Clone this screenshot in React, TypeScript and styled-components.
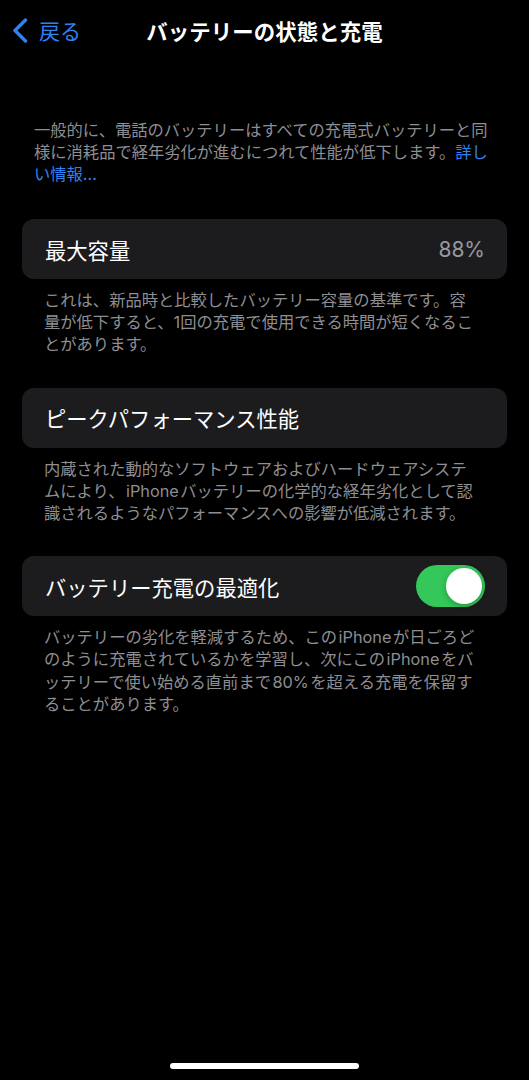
import React from 'react'
import styled, { createGlobalStyle } from 'styled-components'

const GlobalStyle = createGlobalStyle`
  html, body {
    margin: 0;
    padding: 0;
    background: #000;
  }
  body {
    font-family: "Inter", "Noto Sans CJK JP", "Noto Sans", sans-serif;
    -webkit-font-smoothing: antialiased;
  }
`

const Screen = styled.div`
  width: 529px;
  min-height: 1080px;
  display: flex;
  flex-direction: column;
  background: #000;
  color: #fff;
`

const NavBar = styled.header`
  height: 60px;
  display: grid;
  grid-template-columns: 1fr auto 1fr;
  align-items: center;
`

const BackButton = styled.button`
  justify-self: start;
  display: flex;
  align-items: center;
  gap: 11px;
  padding: 0 0 0 12px;
  border: 0;
  background: none;
  color: #2f83f0;
  font-family: inherit;
  font-size: 21px;
  cursor: pointer;
`

const Title = styled.h1`
  margin: 0;
  font-size: 21.4px;
  font-weight: 700;
  letter-spacing: 0.1px;
`

const Content = styled.main`
  display: flex;
  flex-direction: column;
  gap: 32px;
  padding: 59px 22px 0;
`

const Intro = styled.p`
  margin: 0 0 2px;
  padding: 0 12px;
  font-size: 16.3px;
  line-height: 22px;
  color: #8e8e93;
  line-break: loose;
`

const Link = styled.a`
  color: #2f83f0;
  text-decoration: none;
`

const Section = styled.section`
  display: flex;
  flex-direction: column;
  gap: 10px;
`

const Cell = styled.div`
  height: 60px;
  display: flex;
  align-items: center;
  justify-content: space-between;
  padding: 0 22px 0 23px;
  border-radius: 12px;
  background: #1c1c1e;
`

const Label = styled.span`
  font-size: 21.3px;
  color: #fff;
`

const Value = styled.span`
  font-size: 21px;
  color: #98989e;
`

const Note = styled.p`
  margin: 0;
  padding: 0 10px 0 22px;
  font-size: 16.3px;
  line-height: 22.2px;
  color: #8e8e93;
`

// footnotes keep the same line breaks as the system settings screen
const NoteLine = styled.span`
  display: block;
  white-space: nowrap;
`

// latin words get a little air between the kana around them
const Word = styled.span`
  padding: 0 1.5px;
`

const Footnote = ({ lines }: { lines: React.ReactNode[] }) => (
  <Note>
    {lines.map((line, i) => (
      <NoteLine key={i}>{line}</NoteLine>
    ))}
  </Note>
)

const Switch = styled.button<{ $on: boolean }>`
  position: relative;
  width: 69px;
  height: 42px;
  padding: 0;
  border: 0;
  border-radius: 21px;
  background: ${({ $on }) => ($on ? '#34c759' : '#39393d')};
  cursor: pointer;

  &::after {
    content: '';
    position: absolute;
    top: 3px;
    left: ${({ $on }) => ($on ? '30px' : '3px')};
    width: 36px;
    height: 36px;
    border-radius: 50%;
    background: #fff;
    box-shadow: 0 2px 6px rgba(0, 0, 0, 0.25);
  }
`

const Spacer = styled.div`
  flex: 1;
`

const HomeIndicator = styled.div`
  align-self: center;
  width: 189px;
  height: 6px;
  margin-bottom: 11px;
  border-radius: 3px;
  background: #fff;
`

const Chevron = () => (
  <svg width="16" height="25" viewBox="0 0 16 25" fill="none">
    <path d="M13.5 2 L3 12.5 L13.5 23" stroke="currentColor" strokeWidth="3.4" strokeLinecap="round" strokeLinejoin="round" />
  </svg>
)

const capacityNote = [
  'これは、新品時と比較したバッテリー容量の基準です。容',
  '量が低下すると、1回の充電で使用できる時間が短くなるこ',
  'とがあります。',
]

const performanceNote = [
  '内蔵された動的なソフトウェアおよびハードウェアシステ',
  <>ムにより、<Word>iPhone</Word>バッテリーの化学的な経年劣化として認</>,
  '識されるようなパフォーマンスへの影響が低減されます。',
]

const optimizeNote = [
  <>バッテリーの劣化を軽減するため、この<Word>iPhone</Word>が日ごろど</>,
  <>のように充電されているかを学習し、次にこの<Word>iPhone</Word>をバ</>,
  <>ッテリーで使い始める直前まで<Word>80%</Word>を超える充電を保留す</>,
  'ることがあります。',
]

const App: React.FC = () => {
  const [optimized, setOptimized] = React.useState(true)

  return (
    <>
      <GlobalStyle />
      <Screen lang="ja">
        <NavBar>
          <BackButton>
            <Chevron />
            戻る
          </BackButton>
          <Title>バッテリーの状態と充電</Title>
          <span />
        </NavBar>

        <Content>
          <Intro>
            一般的に、電話のバッテリーはすべての充電式バッテリーと同様に消耗品で経年劣化が進むにつれて性能が低下します。
            <Link href="#">詳しい情報...</Link>
          </Intro>

          <Section>
            <Cell>
              <Label>最大容量</Label>
              <Value>88%</Value>
            </Cell>
            <Footnote lines={capacityNote} />
          </Section>

          <Section>
            <Cell>
              <Label>ピークパフォーマンス性能</Label>
            </Cell>
            <Footnote lines={performanceNote} />
          </Section>

          <Section>
            <Cell>
              <Label>バッテリー充電の最適化</Label>
              <Switch $on={optimized} aria-pressed={optimized} onClick={() => setOptimized(!optimized)} />
            </Cell>
            <Footnote lines={optimizeNote} />
          </Section>
        </Content>

        <Spacer />
        <HomeIndicator />
      </Screen>
    </>
  )
}

export default App
